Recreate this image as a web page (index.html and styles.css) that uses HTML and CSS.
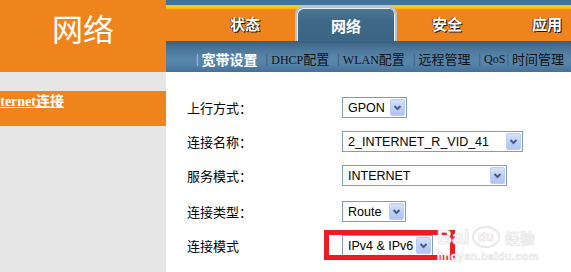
FILE: index.html
```html
<!DOCTYPE html>
<html>
<head>
<meta charset="utf-8">
<link rel="stylesheet" href="styles.css">
</head>
<body>
<div class="page">
  <aside class="side">
    <div class="side-head">网络</div>
    <div class="side-gap"></div>
    <div class="side-item"><a class="side-link" href="#">Internet连接</a></div>
    <div class="side-rest"></div>
  </aside>
  <main class="main">
    <div class="topbar"></div>
    <nav class="tabs">
      <div class="tab">状态</div>
      <div class="tab active">网络</div>
      <div class="tab">安全</div>
      <div class="tab">应用</div>
    </nav>
    <div class="submenu">
      <span class="sep light">|</span><span class="sub current">宽带设置</span>
      <span class="sep">|</span><span class="sub"><span class="lat">DHCP</span>配置</span>
      <span class="sep">|</span><span class="sub"><span class="lat">WLAN</span>配置</span>
      <span class="sep">|</span><span class="sub">远程管理</span>
      <span class="sep">|</span><span class="sub tight"><span class="lat">QoS</span></span><span class="sep">|</span><span class="sub">时间管理</span>
    </div>
    <div class="content">
      <div class="form">
        <div class="label">上行方式：</div>
        <div class="field"><div class="select w65"><span class="val">GPON</span><span class="btn"><svg width="13" height="15" viewBox="0 0 13 15"><polyline points="3.5,6 6.5,9 9.5,6" fill="none" stroke="#4a5d82" stroke-width="2"/></svg></span></div></div>

        <div class="label">连接名称：</div>
        <div class="field"><div class="select w181"><span class="val">2_INTERNET_R_VID_41</span><span class="btn"><svg width="13" height="15" viewBox="0 0 13 15"><polyline points="3.5,6 6.5,9 9.5,6" fill="none" stroke="#4a5d82" stroke-width="2"/></svg></span></div></div>

        <div class="label">服务模式：</div>
        <div class="field"><div class="select w165"><span class="val">INTERNET</span><span class="btn"><svg width="13" height="15" viewBox="0 0 13 15"><polyline points="3.5,6 6.5,9 9.5,6" fill="none" stroke="#4a5d82" stroke-width="2"/></svg></span></div></div>

        <div class="label">连接类型：</div>
        <div class="field"><div class="select w64"><span class="val">Route</span><span class="btn"><svg width="13" height="15" viewBox="0 0 13 15"><polyline points="3.5,6 6.5,9 9.5,6" fill="none" stroke="#4a5d82" stroke-width="2"/></svg></span></div></div>

        <div class="label">连接模式</div>
        <div class="field"><div class="select w91"><span class="val">IPv4 &amp; IPv6</span><span class="btn"><svg width="13" height="15" viewBox="0 0 13 15"><polyline points="3.5,6 6.5,9 9.5,6" fill="none" stroke="#4a5d82" stroke-width="2"/></svg></span></div></div>
      </div>
    </div>
  </main>
</div>
<div class="highlight"></div>
<div class="watermark">
  <div class="wm-top"><span class="wm-bai">Bai</span><span class="wm-paw">du</span><span class="wm-jy">经验</span></div>
  <div class="wm-url">jingyan.baidu.com</div>
</div>
</body>
</html>
```

FILE: styles.css
```css
html, body {
  margin: 0;
  padding: 0;
  background: #ffffff;
  overflow: hidden;
}

.page {
  display: flex;
  width: 571px;
  height: 272px;
}

/* ---------- left column ---------- */
.side {
  width: 166px;
  flex: none;
  display: flex;
  flex-direction: column;
  background: #e6e6e6;
}

.side-head {
  height: 72px;
  box-sizing: border-box;
  padding-top: 8px;
  line-height: 40px;
  background: #ef831c;
  color: #ffffff;
  text-align: center;
  font-family: "Noto Sans CJK SC", sans-serif;
  font-size: 31px;
  font-weight: 400;
}

.side-gap {
  height: 19px;
}

.side-item {
  height: 35px;
  background: #ef831c;
  box-sizing: border-box;
  padding-top: 1px;
  overflow: hidden;
}

.side-link {
  display: inline-block;
  margin-left: -13px;
  color: #ffffff;
  font-family: "Liberation Serif", "Noto Sans CJK SC", serif;
  font-size: 14px;
  font-weight: bold;
  line-height: 18px;
  text-decoration: underline;
  white-space: nowrap;
}

.side-rest {
  flex: 1;
}

/* ---------- right column ---------- */
.main {
  flex: 1;
  display: flex;
  flex-direction: column;
  min-width: 0;
}

.topbar {
  height: 5px;
  background: #41739a;
}

.tabs {
  height: 36px;
  display: flex;
  padding-left: 29px;
  background: linear-gradient(#ffcc00 0, #ffc400 3px, #f3a40e 4px, #ef831c 5px, #ef831c 100%);
  box-sizing: border-box;
}

.tab {
  width: 100px;
  flex: none;
  display: flex;
  align-items: center;
  justify-content: center;
  padding-top: 1px;
  box-sizing: border-box;
  color: #ffffff;
  font-family: "Noto Sans CJK SC", sans-serif;
  font-size: 15px;
  font-weight: bold;
  text-shadow: 1px 1px 0 #1c1c1c, -1px 0 0 #3a3a3a;
}

.tab.active {
  width: 102px;
  margin-top: 1px;
  border: 2px solid #b4c4d0;
  border-bottom: none;
  border-radius: 8px 8px 0 0;
  background: linear-gradient(#4d7696, #3f6887 40%, #3c6484);
  box-shadow: inset 1px 1px 0 #e8eef2, inset -1px 0 0 #e8eef2;
  text-shadow: none;
}

.submenu {
  height: 31px;
  display: flex;
  align-items: center;
  padding-left: 30px;
  padding-top: 4px;
  box-sizing: border-box;
  background: linear-gradient(#395f7f 0, #4a7598 25%, #5886ab 55%, #5683a8 75%, #44709a 100%);
  font-family: "Liberation Serif", "Noto Sans CJK SC", serif;
  font-size: 13px;
  color: #111111;
  white-space: nowrap;
  overflow: hidden;
}

.sep {
  color: #3e4f5e;
  margin-right: 3px;
}

.sep.light {
  color: #c7d8ea;
}

.sub {
  margin-right: 8px;
}

.sub.tight {
  margin-right: 1px;
}

.sub.current {
  color: #ffffff;
  font-weight: bold;
  font-size: 14px;
}

.lat {
  font-size: 12px;
}

.content {
  flex: 1;
  background: #ffffff;
  padding: 25px 0 0 21px;
}

.form {
  display: grid;
  grid-template-columns: 155px auto;
  grid-template-rows: 34px 34px 36px 34px 34px;
}

.label {
  height: 21px;
  line-height: 21px;
  font-family: "Noto Sans CJK SC", sans-serif;
  font-size: 13px;
  color: #000000;
}

.field {
  display: flex;
  align-items: flex-start;
}

.select {
  height: 21px;
  box-sizing: border-box;
  border: 1px solid #7f9db9;
  background: #ffffff;
  display: flex;
  align-items: center;
  justify-content: space-between;
  padding: 0 1px 0 5px;
}

.w65 { width: 65px; }
.w181 { width: 181px; }
.w165 { width: 165px; }
.w64 { width: 64px; }
.w91 { width: 91px; }

.val {
  font-family: "Liberation Sans", Arial, sans-serif;
  font-size: 12.5px;
  color: #000000;
  white-space: nowrap;
}

.btn {
  width: 15px;
  height: 17px;
  box-sizing: border-box;
  border: 1px solid #bccbf1;
  border-radius: 2px;
  background: linear-gradient(#d6e1fd, #bccdf8 60%, #b1c4f5);
  display: flex;
  align-items: center;
  justify-content: center;
}

/* ---------- overlays ---------- */
.highlight {
  position: absolute;
  left: 324px;
  top: 230px;
  width: 131px;
  height: 30px;
  box-sizing: border-box;
  border: 5px solid #ec1c24;
}

.watermark {
  position: absolute;
  left: 437px;
  top: 226px;
  width: 110px;
  font-family: "Liberation Sans", sans-serif;
  color: #f8f8f8;
}

.wm-top {
  display: flex;
  align-items: center;
  height: 22px;
}

.wm-bai {
  font-size: 21px;
  font-weight: bold;
  -webkit-text-stroke: 0.6px #e0e0e0;
}

.wm-paw {
  width: 28px;
  height: 22px;
  margin-left: 2px;
  border: 2px solid #e8e8e8;
  border-radius: 50%;
  box-sizing: border-box;
  font-size: 13px;
  font-weight: bold;
  line-height: 18px;
  text-align: center;
  -webkit-text-stroke: 0.5px #e0e0e0;
}

.wm-jy {
  margin-left: 5px;
  font-family: "Noto Sans CJK SC", sans-serif;
  font-size: 15px;
  font-weight: bold;
  -webkit-text-stroke: 0.5px #e0e0e0;
}

.wm-url {
  margin-top: 2px;
  font-size: 11px;
  font-weight: bold;
  letter-spacing: 0.3px;
  -webkit-text-stroke: 0.5px #e2e2e2;
}
```
